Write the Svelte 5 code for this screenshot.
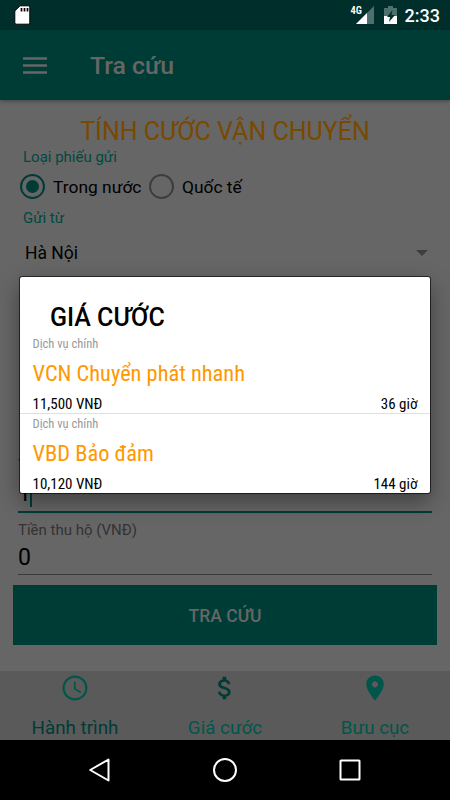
<script lang="ts">
  const tabs = [
    { icon: "history", label: "Hành trình" },
    { icon: "dollar", label: "Giá cước" },
    { icon: "pin", label: "Bưu cục" },
  ];

  const services = [
    { name: "VCN Chuyển phát nhanh", price: "11,500 VNĐ", time: "36 giờ" },
    { name: "VBD Bảo đảm", price: "10,120 VNĐ", time: "144 giờ" },
  ];

  let scope = $state("domestic");
</script>

<div class="screen">
  <div class="status-bar">
    <svg class="sd" width="17" height="20" viewBox="0 0 17 20">
      <path d="M6 .8h8.2q1.6 0 1.6 1.6v15.2q0 1.6-1.6 1.6H2.4Q.8 19.2.8 17.6V6z" fill="#fff" stroke="#000" />
      <path d="M7.500 3v3.500M10.500 3v3.500M13.500 3v3.500" stroke="#000" stroke-width="1.700" />
    </svg>
    <div class="status-right">
      <span class="network">4G</span>
      <svg class="signal" width="18" height="18" viewBox="0 0 18 18">
        <path d="M18 0v18H0z" fill="#4d706d" />
        <path d="M11 7v11H0z" fill="#fff" />
      </svg>
      <svg class="battery" width="13" height="18" viewBox="0 0 13 18">
        <path d="M4 0h5v2h4v8H0V2h4z" fill="#4d706d" />
        <path d="M0 10h13v8H0z" fill="#fff" />
        <path d="M8.500 4 3 11h3l-1 5 6-7H7.500z" fill="#002f2b" />
      </svg>
      <span class="clock">2:33</span>
    </div>
  </div>

  <header class="toolbar">
    <svg width="24" height="17" viewBox="0 0 24 17">
      <path d="M0 1.500h24M0 8.500h24M0 15.500h24" stroke="#666" stroke-width="2.600" />
    </svg>
    <h1>Tra cứu</h1>
  </header>

  <main>
    <h2>TÍNH CƯỚC VẬN CHUYỂN</h2>
    <div class="label">Loại phiếu gửi</div>
    <div class="radios">
      <button class="radio" class:checked={scope === "domestic"} onclick={() => (scope = "domestic")}>
        <span class="ring"></span>Trong nước
      </button>
      <button class="radio" class:checked={scope === "abroad"} onclick={() => (scope = "abroad")}>
        <span class="ring"></span>Quốc tế
      </button>
    </div>
    <div class="label from">Gửi từ</div>
    <div class="select">
      <span>Hà Nội</span>
      <i class="caret"></i>
    </div>

    <div class="field focused">
      <span class="field-label">T</span>
      <div class="value">1<i class="cursor"></i></div>
    </div>
    <div class="field">
      <span class="field-label">Tiền thu hộ (VNĐ)</span>
      <div class="value">0</div>
    </div>
    <button class="submit">TRA CỨU</button>
  </main>

  <nav class="tabs">
    {#each tabs as tab}
      <div class="tab {tab.icon}">
        <svg width="30" height="30" viewBox="0 0 24 24" fill="currentColor">
          {#if tab.icon === "history"}
            <path d="M11.990 2C6.470 2 2 6.480 2 12s4.470 10 9.990 10C17.520 22 22 17.520 22 12S17.520 2 11.990 2zM12 20.200c-4.530 0-8.200-3.670-8.200-8.200S7.470 3.800 12 3.800s8.200 3.670 8.200 8.200-3.670 8.200-8.200 8.200zM12.500 7H11.200v6l5.050 3.150.65-1.130-4.400-2.670z" />
          {:else if tab.icon === "dollar"}
            <path d="M11.800 10.900c-2.270-.59-3-1.200-3-2.150 0-1.090 1.010-1.850 2.700-1.850 1.780 0 2.440.85 2.500 2.100h2.210c-.07-1.720-1.120-3.300-3.210-3.810V3h-3v2.160c-1.940.42-3.500 1.680-3.500 3.610 0 2.310 1.910 3.460 4.700 4.130 2.500.6 3 1.480 3 2.410 0 .69-.49 1.790-2.700 1.790-2.060 0-2.870-.92-2.980-2.100h-2.200c.12 2.190 1.760 3.420 3.680 3.830V21h3v-2.150c1.950-.37 3.500-1.500 3.500-3.550 0-2.840-2.430-3.810-4.700-4.400z" />
          {:else}
            <path d="M12 2C8.130 2 5 5.130 5 9c0 5.250 7 13 7 13s7-7.750 7-13c0-3.870-3.130-7-7-7zm0 9.500c-1.380 0-2.500-1.120-2.500-2.500s1.120-2.500 2.500-2.500 2.500 1.120 2.500 2.500-1.120 2.500-2.500 2.500z" />
          {/if}
        </svg>
        <span>{tab.label}</span>
      </div>
    {/each}
  </nav>

  <div class="system-nav">
    <svg width="26" height="26" viewBox="0 0 26 26"><path d="M21.500 2.500v21L3.200 13z" /></svg>
    <svg width="26" height="26" viewBox="0 0 26 26"><circle cx="13" cy="13" r="11" /></svg>
    <svg width="26" height="26" viewBox="0 0 26 26"><rect x="3.500" y="3.500" width="19" height="19" rx=".5" /></svg>
  </div>

  <div class="dialog" role="dialog">
    <h3>GIÁ CƯỚC</h3>
    {#each services as service}
      <div class="service">
        <div class="kind">Dịch vụ chính</div>
        <div class="name">{service.name}</div>
        <div class="meta">
          <span>{service.price}</span>
          <span>{service.time}</span>
        </div>
      </div>
    {/each}
  </div>
</div>

<style>
  :global(body) {
    margin: 0;
  }

  .screen {
    position: relative;
    width: 450px;
    height: 800px;
    display: flex;
    flex-direction: column;
    overflow: hidden;
    background: #666;
    color: #000;
    font-family: Roboto, sans-serif;
  }

  h1,
  h2,
  h3 {
    margin: 0;
  }

  button {
    padding: 0;
    border: 0;
    background: none;
    color: inherit;
    font-family: inherit;
  }

  .status-bar {
    height: 30px;
    flex: none;
    box-sizing: border-box;
    padding: 0 10px 0 14px;
    display: flex;
    align-items: center;
    justify-content: space-between;
    background: #002f2b;
    color: #fff;
  }

  .status-right {
    height: 30px;
    display: flex;
    align-items: center;
  }

  .network {
    width: 5px;
    height: 20px;
    font-size: 10.5px;
    font-weight: 600;
    font-stretch: 85%;
    line-height: 11px;
    z-index: 1;
  }

  .battery {
    margin: 0 8px 0 10px;
  }

  .clock {
    font-size: 18px;
    font-weight: 500;
    line-height: 30px;
    padding-top: 1px;
  }

  .toolbar {
    height: 70px;
    flex: none;
    box-sizing: border-box;
    padding: 0 23px;
    display: flex;
    align-items: center;
    gap: 43px;
    background: #003c36;
    color: #666;
    box-shadow: 0 1px 4px rgba(0, 0, 0, 0.35);
  }

  .toolbar h1 {
    font-size: 24.8px;
    font-weight: 500;
    line-height: 70px;
    padding-top: 2px;
  }

  main {
    height: 571px;
    flex: none;
    box-sizing: border-box;
    padding: 15px 13px 0;
    display: flex;
    flex-direction: column;
  }

  h2 {
    font-size: 25px;
    font-weight: 400;
    line-height: 33px;
    text-align: center;
    color: #7a4900;
  }

  .label {
    margin-left: 10px;
    font-size: 15px;
    line-height: 18px;
    color: #00493f;
  }

  .radios {
    height: 41px;
    padding-left: 7px;
    display: flex;
    align-items: center;
    gap: 7.5px;
  }

  .radio {
    display: flex;
    align-items: center;
    gap: 8px;
    font-size: 17.4px;
  }

  .ring {
    width: 25px;
    height: 25px;
    box-sizing: border-box;
    border: 2.5px solid #3d3d3d;
    border-radius: 50%;
    display: grid;
    place-items: center;
  }

  .checked .ring {
    border-color: #003c36;
  }

  .checked .ring::after {
    content: "";
    width: 13px;
    height: 13px;
    border-radius: 50%;
    background: #003c36;
  }

  .from {
    padding-top: 2px;
  }

  .select {
    height: 51px;
    padding: 0 9px 0 12px;
    display: flex;
    align-items: center;
    justify-content: space-between;
    font-size: 17.5px;
  }

  .caret {
    border: 6px solid transparent;
    border-top-color: #3d3d3d;
    border-bottom: 0;
  }

  .field {
    height: 55px;
    margin: 0 5px;
    box-sizing: border-box;
    border-bottom: 1px solid #3a3a3a;
  }

  .field-label {
    display: block;
    padding-top: 1px;
    font-size: 15px;
    line-height: 18px;
    color: #333;
  }

  .value {
    display: flex;
    align-items: center;
    font-size: 23px;
    line-height: 38px;
  }

  .focused {
    height: 58px;
    margin-top: 177px;
    margin-bottom: 7px;
    border-bottom: 2px solid #003c36;
  }

  .focused .field-label {
    color: #003c36;
  }

  .focused .value {
    padding-top: 2px;
    line-height: 36px;
  }

  .cursor {
    width: 2px;
    height: 26px;
    margin-left: -1px;
    background: #003c36;
  }

  .submit {
    height: 60px;
    margin-top: 10px;
    padding-top: 1px;
    background: #003c36;
    color: #666;
    font-size: 17.5px;
    font-weight: 500;
  }

  .tabs {
    height: 69px;
    flex: none;
    display: grid;
    grid-template-columns: repeat(3, 1fr);
    background: #5a5a5a;
    color: #00564b;
  }

  .tab {
    padding-top: 2px;
    display: flex;
    flex-direction: column;
    align-items: center;
    font-size: 18.8px;
  }

  .tab span {
    line-height: 22px;
    margin-top: 14px;
  }

  .history span,
  .dollar svg {
    color: #003c36;
  }

  .system-nav {
    height: 60px;
    flex: none;
    display: flex;
    align-items: center;
    justify-content: center;
    gap: 99px;
    background: #000;
  }

  .system-nav svg {
    fill: none;
    stroke: #fff;
    stroke-width: 2;
    stroke-linejoin: round;
  }

  /* floats over the dimmed form */
  .dialog {
    position: absolute;
    top: 277px;
    left: 20px;
    width: 410px;
    height: 216px;
    overflow: hidden;
    border-radius: 2px;
    background: #fff;
    box-shadow: 0 0 0 1px rgba(0, 0, 0, 0.6), 0 8px 22px rgba(0, 0, 0, 0.4);
  }

  h3 {
    padding: 24px 30px 0;
    font-size: 25px;
    font-weight: 500;
    line-height: 33px;
  }

  .service {
    height: 79px;
    padding: 0 12.5px;
    border-bottom: 1.5px solid #e0e0e0;
    font-stretch: 75%;
  }

  .kind {
    padding-top: 1px;
    font-size: 12.5px;
    line-height: 18px;
    color: #999;
  }

  .name {
    font-size: 22.4px;
    line-height: 40px;
    color: #ff9800;
  }

  .meta {
    display: flex;
    justify-content: space-between;
    padding-top: 1px;
    font-size: 15px;
    line-height: 20px;
  }
</style>
